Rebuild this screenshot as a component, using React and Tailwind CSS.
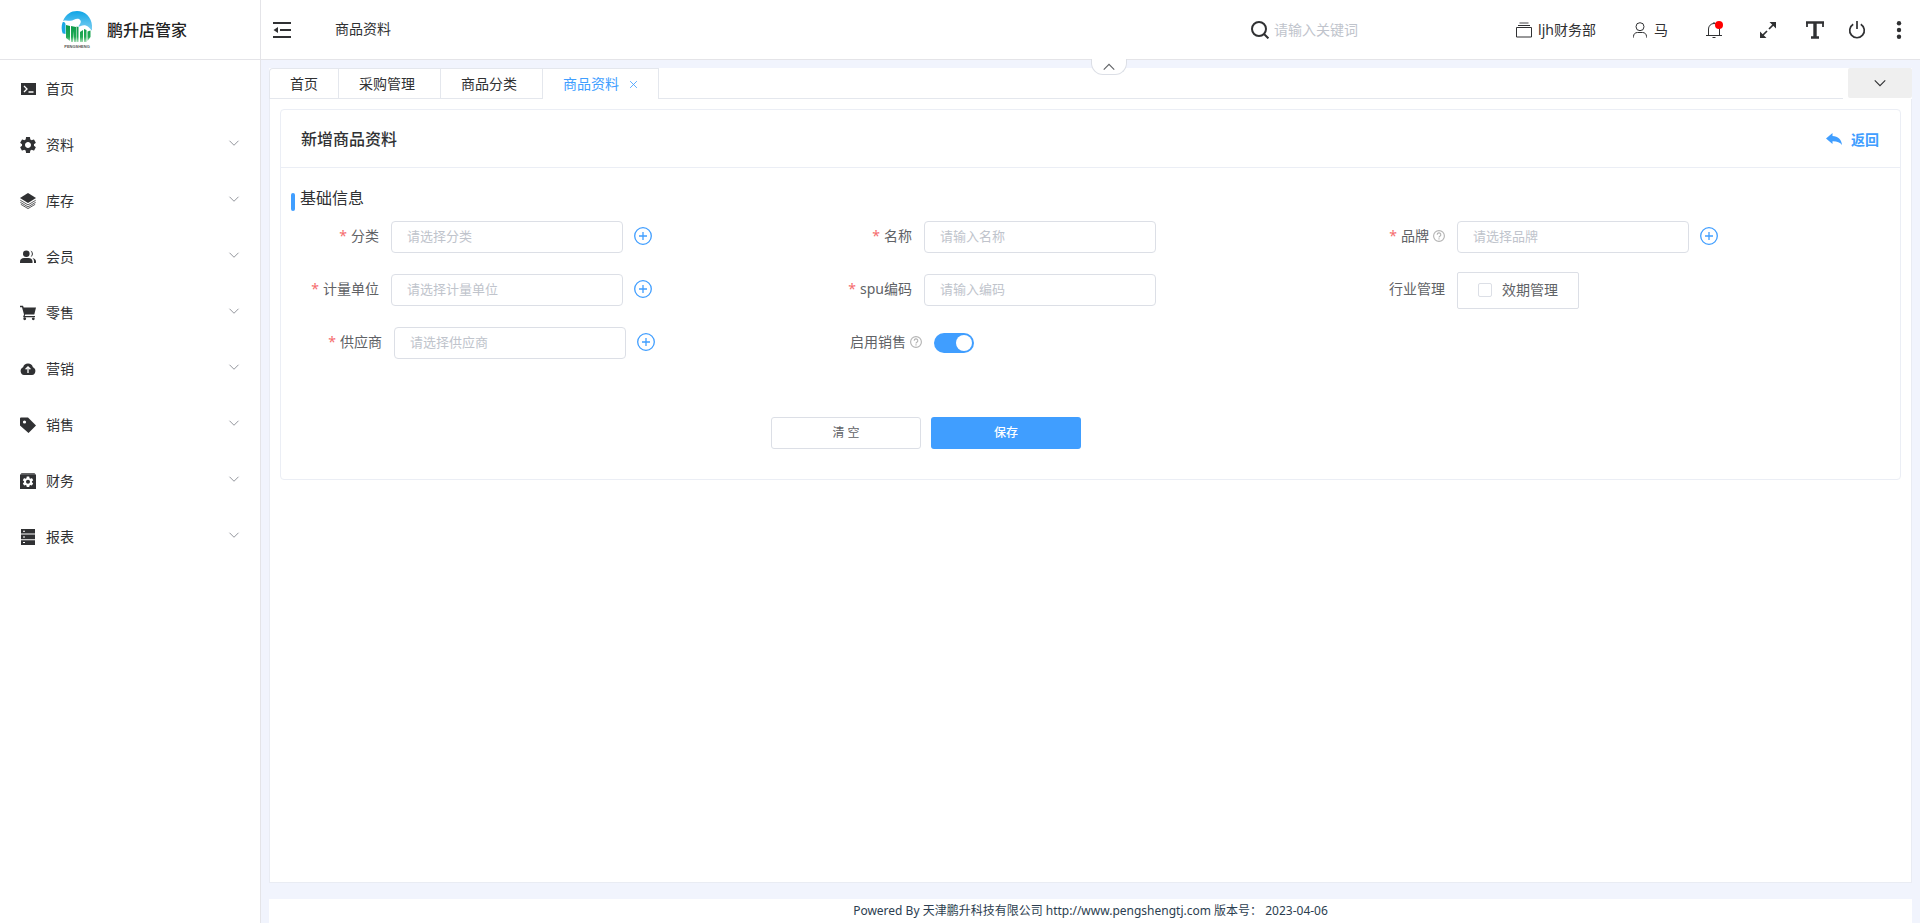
import { MdSettings } from "react-icons/md";

/* ---------- Icons ---------- */

function Svg({ className = "size-4", children, ...rest }) {
  return (
    <svg viewBox="0 0 16 16" className={`shrink-0 ${className}`} fill="currentColor" aria-hidden="true" {...rest}>
      {children}
    </svg>
  );
}

const gearPath =
  "M19.14 12.94c.04-.3.06-.61.06-.94 0-.32-.02-.64-.07-.94l2.03-1.58a.49.49 0 0 0 .12-.61l-1.92-3.32a.488.488 0 0 0-.59-.22l-2.39.96c-.5-.38-1.03-.7-1.62-.94l-.36-2.54a.484.484 0 0 0-.48-.41h-3.84c-.24 0-.43.17-.47.41l-.36 2.54c-.59.24-1.13.57-1.62.94l-2.39-.96c-.22-.08-.47 0-.59.22L2.74 8.87c-.12.21-.08.47.12.61l2.03 1.58c-.05.3-.09.63-.09.94s.02.64.07.94l-2.03 1.58a.49.49 0 0 0-.12.61l1.92 3.32c.12.22.37.29.59.22l2.39-.96c.5.38 1.03.7 1.62.94l.36 2.54c.05.24.24.41.48.41h3.84c.24 0 .44-.17.47-.41l.36-2.54c.59-.24 1.13-.56 1.62-.94l2.39.96c.22.08.47 0 .59-.22l1.92-3.32c.12-.22.07-.47-.12-.61l-2.01-1.58zM12 15.6c-1.98 0-3.6-1.62-3.6-3.6s1.62-3.6 3.6-3.6 3.6 1.62 3.6 3.6-1.62 3.6-3.6 3.6z";

const TerminalIcon = () => (
  <Svg>
    <path d="M1 2h15v12H1z" />
    <path d="m4 5 3 3-3 3M8.500 11h5" fill="none" stroke="#fff" strokeWidth="1.300" />
  </Svg>
);

const GearIcon = () => <MdSettings className="size-5 -mx-[2px] shrink-0" />;

const StackIcon = () => (
  <Svg>
    <path d="m8 0 8 5-8 5-8-5z" />
    <path d="m.3 7.300 7.700 4.600 7.700-4.600M.3 9.300 8 13.900l7.700-4.600M.8 11.300 8 15.600l7.200-4.300" fill="none" stroke="currentColor" strokeWidth=".8" />
  </Svg>
);

const UsersIcon = () => (
  <Svg>
    <circle cx="6.300" cy="4.700" r="3.300" />
    <path d="M0 14v-1.500C0 10.300 1.800 9 4 9h4.500c2.300 0 4 1.500 4 3.500V14z" />
    <path d="M10.500 1.500a3.400 3.400 0 0 1 0 6.500 5 5 0 0 0 0-6.500zM12.500 9c2 .3 3.500 1.600 3.500 3.500V14h-2v-1.500c0-1.500-.5-2.600-1.500-3.500z" />
  </Svg>
);

const CartIcon = () => (
  <Svg>
    <path d="M0 .8h3l.7 1.700H16l-1.700 7H5.200l-.5 1.500H15v1.300H3l1-2.700L2 2.200H0z" />
    <path d="M4 11h1.500v1.500H4z" />
    <circle cx="4.700" cy="13.800" r="1.400" />
    <circle cx="13.300" cy="13.800" r="1.400" />
  </Svg>
);

const CloudUpIcon = () => (
  <Svg>
    <path d="M12.900 6.200A5.100 5.100 0 0 0 3.100 6.200 4.100 4.100 0 0 0 4 14h8a4.100 4.100 0 0 0 .9-7.800z" />
    <path d="M8 12V6.500M5.600 8.200 8 5.800l2.400 2.400" fill="none" stroke="#fff" strokeWidth="1.300" />
  </Svg>
);

const TagIcon = () => (
  <Svg>
    <path fillRule="evenodd" d="M0 1.500A1 1 0 0 1 1 .5h7L16 8.500 8.500 16 0 8.500zm4.500 1.900a1.600 1.600 0 1 0 0 3.200 1.600 1.600 0 0 0 0-3.200z" />
  </Svg>
);

const FinanceIcon = () => (
  <Svg>
    <path d="M1.500 0h13L16 2H0z" opacity=".75" />
    <path d="M0 1.800h16V16H0z" />
    <path d={gearPath} fill="#fff" transform="translate(1.400 2.200) scale(.55)" />
  </Svg>
);

const ServerIcon = () => (
  <Svg>
    <path d="M1 0h14v4.600H1zM1 5.600h14v4.600H1zM1 11.200h14V16H1z" />
    <path d="M3 1.800h2v1H3zM3 7.400h2v1H3zM3 13.100h2v1H3z" fill="#fff" />
  </Svg>
);

const Chevron = ({ className = "size-3", up = false }) => (
  <Svg className={className} fill="none" stroke="currentColor" strokeWidth="1.300">
    <path d={up ? "M2 11l6-6 6 6" : "M2 5l6 6 6-6"} />
  </Svg>
);

const FoldIcon = () => (
  <Svg className="size-[18px]" viewBox="0 0 18 18">
    <path d="M0 1h18v2H0zM7 8h11v2H7zM0 15h18v2H0zM.5 9 5 6v6z" />
  </Svg>
);

const SearchIcon = () => (
  <Svg className="size-[18px]" viewBox="0 0 18 18" fill="none" stroke="currentColor" strokeWidth="2">
    <circle cx="8" cy="8" r="7" />
    <path d="m13 13 4.400 4.400" />
  </Svg>
);

const DeptIcon = () => (
  <Svg fill="none" stroke="currentColor">
    <path d="M.5 5.500h15v9.500h-15zM2 3.500h12" />
    <path d="M3.500 1h9" strokeWidth="1.500" opacity=".6" />
  </Svg>
);

const UserIcon = () => (
  <Svg fill="none" stroke="currentColor">
    <circle cx="8" cy="4.700" r="4" />
    <path d="M1.500 15.500v-1c0-2.400 1.600-4 4-4h5c2.400 0 4 1.600 4 4v1" />
  </Svg>
);

const BellIcon = () => (
  <Svg fill="none" stroke="currentColor">
    <path d="M0 13.500h16M2.500 13.500V7a5.500 5.500 0 0 1 11 0v6.500M8 0v1.500M6.500 15.500h3" />
  </Svg>
);

const ExpandIcon = () => (
  <Svg>
    <path d="M9.500 0H16v6.500zM0 9.500 6.500 16H0z" />
    <path d="m9 7 5-5M7 9l-5 5" fill="none" stroke="currentColor" strokeWidth="1.700" />
  </Svg>
);

const FontIcon = () => (
  <Svg className="size-[18px]" viewBox="0 0 18 18" fill="none" stroke="currentColor">
    <path d="M0 1.500h18M5 16.500h8" strokeWidth="2.400" />
    <path d="M1 1v5M17 1v5" strokeWidth="1.800" />
    <path d="M9 1v15" strokeWidth="3.400" />
  </Svg>
);

const PowerIcon = () => (
  <Svg className="size-[18px]" viewBox="0 0 18 18" fill="none" stroke="currentColor" strokeWidth="1.700">
    <path d="M5.200 3.200a7.300 7.300 0 1 0 7.600 0M9 0v8" />
  </Svg>
);

const MoreIcon = () => (
  <Svg className="size-[18px]" viewBox="0 0 18 18">
    <circle cx="9" cy="2.200" r="2.200" />
    <circle cx="9" cy="9" r="2.200" />
    <circle cx="9" cy="15.800" r="2.200" />
  </Svg>
);

const BackIcon = () => (
  <Svg>
    <path d="M0 6.500 6.500 1v3C12 4.200 15.500 7.500 16 13c-2-2.700-5-3.800-9.500-3.700V12z" />
  </Svg>
);

const PlusCircleIcon = () => (
  <Svg className="size-[18px]" viewBox="0 0 18 18" fill="none" stroke="currentColor" strokeWidth="1.300">
    <circle cx="9" cy="9" r="8.300" />
    <path d="M9 5v8M5 9h8" />
  </Svg>
);

const HelpIcon = () => (
  <Svg className="ml-1 size-3 text-[#b4b4b4]" fill="none" stroke="currentColor" strokeWidth="1.500">
    <circle cx="8" cy="8" r="7.200" />
    <path d="M5.600 6.300a2.400 2.400 0 1 1 3.600 2c-.8.500-1.200.8-1.200 1.700M8 11v1.500" />
  </Svg>
);

function Logo() {
  return (
    <svg viewBox="0 0 32 38" className="h-[38px] w-8 shrink-0" role="img" aria-label="鹏升">
      <defs>
        <linearGradient id="sky" x1="0" y1="0" x2="0" y2="1">
          <stop offset="0" stopColor="#0fa5e6" />
          <stop offset="1" stopColor="#7fd0f2" />
        </linearGradient>
        <linearGradient id="hill" x1="0" y1="0" x2="0" y2="1">
          <stop offset="0" stopColor="#0b9a4a" />
          <stop offset=".7" stopColor="#22aa55" />
          <stop offset="1" stopColor="#a5dcb4" />
        </linearGradient>
      </defs>
      <path d="M2 10C5 3 10 0 16 0c8 0 14.500 6 15 14.500v5c-2-1.500-3-4.500-7-5.300-3-.4-5 1.400-7 1.300 3-3 4-6 1-7.500-3-1.300-6 2-9 1.800C6.500 9.700 4.500 9 2 10z" fill="url(#sky)" />
      <path d="M1.500 11.500c1.500-1 2.500 0 3 1.500v10c-1-.5-2-.7-2.800-.5C.4 19 .3 15 1.500 11.500z" fill="#1aa8e4" />
      <path d="M5 14l4 1v15l-4-3zM10 15l5 1v15h-2V20l-1 11h-2zM15.500 15.500l2 .5v15h-2zM19 21l3-2v12h-3zM23 18l2.500 1v12H23zM26.500 20.500l3-1V26l-3 4z" fill="url(#hill)" />
      <text x="16" y="37" textAnchor="middle" fontSize="4" fontWeight="700" fill="#555" fontFamily="Liberation Sans, sans-serif">
        PENGSHENG
      </text>
    </svg>
  );
}

/* ---------- Sidebar ---------- */

const menu = [
  { label: "首页", icon: TerminalIcon, leaf: true },
  { label: "资料", icon: GearIcon },
  { label: "库存", icon: StackIcon },
  { label: "会员", icon: UsersIcon },
  { label: "零售", icon: CartIcon },
  { label: "营销", icon: CloudUpIcon },
  { label: "销售", icon: TagIcon },
  { label: "财务", icon: FinanceIcon },
  { label: "报表", icon: ServerIcon },
];

function Sidebar() {
  return (
    <aside className="flex w-[261px] shrink-0 flex-col border-r border-[#e4e4e8] bg-white">
      <div className="flex h-[60px] items-center gap-[14px] border-b border-[#e4e4e8] pl-[61px] text-base font-medium text-[#222]">
        <Logo />
        鹏升店管家
      </div>
      <nav className="pt-px">
        {menu.map(({ label, icon: Icon, leaf }) => (
          <a key={label} href="#" className="flex h-14 items-center gap-[10px] pr-5 pl-5">
            <Icon />
            <span>{label}</span>
            {!leaf && <Chevron className="mb-1 ml-auto size-3 text-[#909399]" />}
          </a>
        ))}
      </nav>
    </aside>
  );
}

/* ---------- Header ---------- */

function Header() {
  return (
    <header className="relative flex h-[60px] shrink-0 items-center border-b border-[#e4e4e8] bg-white pr-3">
      <button type="button" aria-label="折叠菜单" className="ml-3">
        <FoldIcon />
      </button>
      <span className="ml-11 pb-[2px]">商品资料</span>

      <label className="ml-auto flex items-center gap-[5px]">
        <SearchIcon />
        <input
          type="text"
          aria-label="搜索"
          placeholder="请输入关键词"
          className="w-[200px] outline-none placeholder:text-[#c0c4cc]"
        />
      </label>
      <button type="button" className="ml-[42px] flex items-center gap-[6px]">
        <DeptIcon />
        ljh财务部
      </button>
      <button type="button" className="ml-9 flex items-center gap-[6px]">
        <UserIcon />
        马
      </button>
      <button type="button" aria-label="消息" className="relative ml-[38px]">
        <BellIcon />
        <span className="absolute -top-px -right-px size-2 rounded-full bg-[#ff0000]" />
      </button>
      <button type="button" aria-label="全屏" className="ml-[38px]">
        <ExpandIcon />
      </button>
      <button type="button" aria-label="字号" className="ml-[30px]">
        <FontIcon />
      </button>
      <button type="button" aria-label="退出" className="ml-6">
        <PowerIcon />
      </button>
      <button type="button" aria-label="更多" className="ml-6">
        <MoreIcon />
      </button>

      <button
        type="button"
        aria-label="收起顶栏"
        className="absolute top-[59px] left-1/2 flex h-4 w-9 items-center justify-center rounded-b-xl border border-t-0 border-[#dcdfe6] bg-white text-[#606266]"
      >
        <Chevron up className="size-[14px]" />
      </button>
    </header>
  );
}

/* ---------- Tabs ---------- */

function Tabs() {
  const tab = "flex h-[30px] items-center border-r border-b border-[#e4e7ed] pl-5";
  return (
    <div className="flex">
      <div className="flex rounded-tl border-t border-l border-[#e4e7ed]">
        <a href="#" className={`${tab} pr-5`}>首页</a>
        <a href="#" className={`${tab} pr-[25px]`}>采购管理</a>
        <a href="#" className={`${tab} pr-[25px]`}>商品分类</a>
        <div className="flex h-[30px] items-center border-r border-[#e4e7ed] pr-5 pl-5 text-[#409eff]">
          商品资料
          <button type="button" aria-label="关闭" className="ml-[10px]">
            <Svg className="size-[9px]" fill="none" stroke="currentColor" strokeWidth="1.500">
              <path d="m2 2 12 12M14 2 2 14" />
            </Svg>
          </button>
        </div>
      </div>
      <div className="mr-[5px] flex-1 border-b border-[#e4e7ed]" />
      <button type="button" aria-label="标签操作" className="flex h-[30px] w-16 items-center justify-center rounded-xs bg-[#efefef]">
        <Chevron className="size-[14px]" />
      </button>
    </div>
  );
}

/* ---------- Form ---------- */

function Field({ id, label, required, help, labelWidth = "w-[100px]", children }) {
  return (
    <div className="flex h-8 items-center">
      <label htmlFor={id} className={`flex shrink-0 items-center justify-end pr-3 pb-[2px] text-[#606266] ${labelWidth}`}>
        {required && <span className="mr-1 text-[#f56c6c]">*</span>}
        {label}
        {help && <HelpIcon />}
      </label>
      {children}
    </div>
  );
}

function TextField({ id, placeholder, addable, ...field }) {
  return (
    <Field id={id} required {...field}>
      <input
        id={id}
        type="text"
        placeholder={placeholder}
        className="h-8 w-[232px] rounded border border-[#dcdfe6] bg-white px-[15px] pb-[2px] text-[13px] text-[#606266] outline-none placeholder:text-[#c0c4cc]"
      />
      {addable && (
        <button type="button" aria-label={`新增${field.label}`} className="ml-[11px] pb-[2px] text-[#409eff]">
          <PlusCircleIcon />
        </button>
      )}
    </Field>
  );
}

function ProductForm() {
  return (
    <form className="px-[10px] pb-[30px]" onSubmit={(e) => e.preventDefault()}>
      <h3 className="flex items-end gap-[5px] pt-[18px] text-base">
        <span className="h-[18px] w-1 rounded-xs bg-[#409eff]" />
        <span className="pb-px">基础信息</span>
      </h3>
      <div className="mt-[10px] grid grid-cols-3 gap-y-[21px]">
        <TextField id="category" label="分类" placeholder="请选择分类" addable />
        <TextField id="name" label="名称" placeholder="请输入名称" />
        <TextField id="brand" label="品牌" placeholder="请选择品牌" help addable />
        <TextField id="unit" label="计量单位" placeholder="请选择计量单位" addable />
        <TextField id="spu" label="spu编码" placeholder="请输入编码" />
        <Field id="expiry" label="行业管理">
          <label className="flex h-[37px] shrink-0 items-center gap-[10px] rounded-xs border border-[#dcdfe6] px-5 text-[#606266]">
            <input id="expiry" type="checkbox" className="size-[14px] appearance-none rounded-xs border border-[#dcdfe6] bg-white checked:bg-[#409eff]" />
            效期管理
          </label>
        </Field>
        <TextField id="supplier" label="供应商" placeholder="请选择供应商" labelWidth="w-[103px]" addable />
        <Field id="onsale" label="启用销售" help labelWidth="w-[110px]">
          <input
            id="onsale"
            type="checkbox"
            role="switch"
            defaultChecked
            className="h-5 w-10 appearance-none rounded-full bg-[#dcdfe6] p-[2px] before:block before:size-4 before:rounded-full before:bg-white checked:bg-[#409eff] checked:before:ml-5"
          />
        </Field>
      </div>
      <div className="mt-[58px] flex justify-center gap-[10px] pr-[329px] text-xs">
        <button type="reset" className="h-8 w-[150px] rounded-[3px] border border-[#dcdfe6] bg-white text-[#606266]">
          清 空
        </button>
        <button type="submit" className="h-8 w-[150px] rounded-[3px] bg-[#409eff] font-medium text-white">
          保存
        </button>
      </div>
    </form>
  );
}

export default function App() {
  return (
    <div className="flex h-screen overflow-hidden bg-[#f1f4fd] font-['Noto_Sans','Noto_Sans_CJK_SC',sans-serif] text-sm text-[#303133]">
      <Sidebar />
      <div className="flex min-w-0 flex-1 flex-col">
        <Header />
        <main className="mx-2 mt-2 flex flex-1 flex-col bg-white">
          <Tabs />
          <div className="flex-1 border-x border-b border-[#e9ecf3] p-[10px]">
            <section className="rounded border border-[#ebeef5]">
              <div className="flex h-[58px] items-center justify-between border-b border-[#ebeef5] pr-[21px] pl-5">
                <h2 className="text-base font-medium">新增商品资料</h2>
                <button type="button" className="flex items-center gap-[9px] pt-[2px] font-bold text-[#409eff]">
                  <BackIcon />
                  返回
                </button>
              </div>
              <ProductForm />
            </section>
          </div>
        </main>
        <footer className="mx-2 mt-4 h-6 shrink-0 bg-white text-center text-xs text-[#2c3e50]">
          <p className="h-[19px] overflow-hidden leading-6">
            Powered By 天津鹏升科技有限公司 http://www.pengshengtj.com 版本号： 2023-04-06
          </p>
        </footer>
      </div>
    </div>
  );
}
